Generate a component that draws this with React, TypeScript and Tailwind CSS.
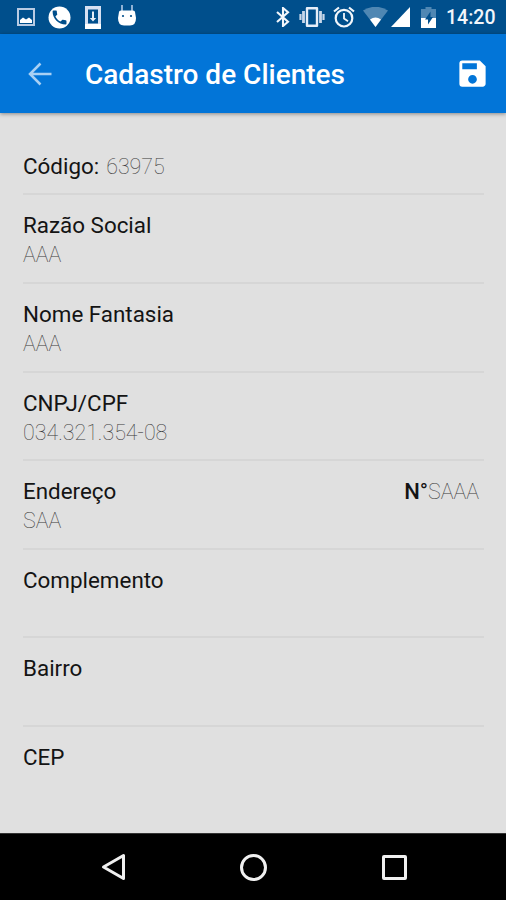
import React from 'react';
import { MdSave } from 'react-icons/md';

type FieldProps = {
    label: string;
    value?: string;
    children?: React.ReactNode;
    last?: boolean;
};

function Field({ label, value, children, last }: FieldProps) {
    return (
        <div
            className={
                last
                    ? 'h-[88.6px] pt-[16px]'
                    : 'h-[88.6px] pt-[16px] border-b-2 border-[#d6d6d6]'
            }
        >
            <div className="flex justify-between leading-[29px]">
                <span className="text-[22.4px] text-[#141414]">{label}</span>
                {children}
            </div>
            <p className="text-[21.4px] leading-[30px] font-thin text-[#3c3c3c]">
                {value}
            </p>
        </div>
    );
}

function StatusBar() {
    return (
        <div className="h-[34px] shrink-0 flex items-center justify-between bg-[#004f8c] text-[#f2f6fb] pl-[17px] pr-[11px]">
            <div className="flex items-center">
                <svg className="w-[18px] h-[18px]" viewBox="0 0 18 18">
                    <path
                        d="M1 1h16v16H1z"
                        fill="none"
                        stroke="#b9cbe3"
                        strokeWidth="2"
                    />
                    <path d="M3 15v-3l3-2.500 3 2 3-2 3 2.500v3z" fill="#fff" />
                </svg>
                <svg className="w-[23px] h-[23px] ml-[13px]" viewBox="0 0 23 23">
                    <circle cx="11.500" cy="11.500" r="11" fill="#fff" />
                    <path
                        transform="translate(2.300 2.300) scale(.77)"
                        d="M20 15.500c-1.200 0-2.400-.2-3.600-.6-.3-.1-.7 0-1 .2l-2.200 2.200c-2.800-1.400-5.100-3.800-6.600-6.600l2.200-2.200c.3-.3.4-.7.2-1C8.700 6.400 8.500 5.200 8.500 4c0-.6-.4-1-1-1H4c-.6 0-1 .4-1 1 0 9.400 7.600 17 17 17 .6 0 1-.4 1-1v-3.500c0-.6-.4-1-1-1z"
                        fill="#004f8c"
                    />
                </svg>
                <svg className="w-[16px] h-[23px] ml-[14px]" viewBox="0 0 16 23">
                    <path
                        d="M0 0h16v23H0zM3 3.500v14h10v-14z"
                        fill="#d6e0f2"
                        fillRule="evenodd"
                    />
                    <path d="M0 18h16v5H0z" fill="#fff" />
                    <path d="M7 5.500h2V12h2.200L8 15.500 4.800 12H7z" fill="#e6eef8" />
                </svg>
                <svg className="w-[18px] h-[22px] ml-[17px] -mt-1" viewBox="0 0 18 22">
                    <path
                        d="M4 1v6M14 1v6"
                        stroke="#9fbcdc"
                        strokeWidth="1.800"
                    />
                    <path
                        d="M1 8Q1 6.500 3 6.500h12q2 0 2 1.500l1 6Q18 21.500 12 21.500H6Q0 21.500 0 14z"
                        fill="#fff"
                    />
                    <circle cx="5" cy="12" r="1.100" fill="#004f8c" />
                    <circle cx="13" cy="12" r="1.100" fill="#004f8c" />
                </svg>
            </div>
            <div className="flex items-center">
                <svg className="w-[14px] h-[20px] mr-[9px]" viewBox="0 0 14 20">
                    <path
                        d="M1 5l11 9.800-5 4.200V1l5 4.200L1 15"
                        fill="none"
                        stroke="#f2f6fb"
                        strokeWidth="2.100"
                    />
                </svg>
                <svg className="w-[26px] h-[20px] mr-[8px]" viewBox="0 0 26 20">
                    <path
                        d="M8 1.300h10v17.400H8z"
                        fill="none"
                        stroke="#e6eef8"
                        strokeWidth="2.400"
                        strokeLinejoin="round"
                    />
                    <path
                        d="M4.500 4v12M21.500 4v12"
                        stroke="#c8d8ea"
                        strokeWidth="2.800"
                    />
                    <path
                        d="M1.500 7v6M24.500 7v6"
                        stroke="#c8d8ea"
                        strokeWidth="2.200"
                    />
                </svg>
                <svg className="w-[22px] h-[22px] mr-[8px]" viewBox="0 0 22 22">
                    <g fill="none" stroke="#f2f6fb" strokeWidth="2.200">
                        <circle cx="11" cy="12.200" r="8.300" />
                        <path d="M1 5.500l5-4M21 5.500l-5-4" />
                        <path d="M11 7v5.500l4 2.700" strokeWidth="1.800" />
                    </g>
                </svg>
                <svg className="w-[25px] h-[20px] mr-[3px]" viewBox="0 0 25 20">
                    <path d="M0 3.500Q12.500-4 25 3.500L12.500 20z" fill="#4f87b3" />
                    <path d="M7 12.500Q12.500 8.500 18 12.500L12.500 20z" fill="#fff" />
                </svg>
                <svg className="w-[19px] h-[20px] mr-[11px]" viewBox="0 0 19 20">
                    <path d="M19 0v20H0z" fill="#fff" />
                </svg>
                <svg className="w-[15px] h-[21px] mr-[10px]" viewBox="0 0 15 21">
                    <path d="M4.500 0h6v2H15v19H0V2h4.500z" fill="#4f87b3" />
                    <path d="M0 11h15v10H0z" fill="#fff" />
                    <path d="M9.500 4.500L4 12.500h3v5L12 10H9.500z" fill="#004f8c" />
                </svg>
                <span className="w-[49px] pt-[1px] text-[19.5px] leading-[33px] font-medium whitespace-nowrap">
                    14:20
                </span>
            </div>
        </div>
    );
}

export default function App() {
    return (
        <div className="w-full h-[900px] flex flex-col overflow-hidden bg-[#e0e0e0] font-['Roboto',sans-serif]">
            <StatusBar />
            <header className="h-[79px] shrink-0 flex items-center bg-[#0275d8] text-white pl-[28px] pr-[20px] shadow-[0_1px_4px_rgba(0,0,0,0.4)]">
                <svg className="w-[24px] h-[24px]" viewBox="0 0 24 24">
                    <path
                        d="M12.500 1.500L2 12l10.500 10.500M2 12h21.500"
                        fill="none"
                        stroke="#a8d0f4"
                        strokeWidth="2.500"
                    />
                </svg>
                <h1 className="flex-1 ml-[33px] pt-[2px] text-[28px] leading-[32px] font-medium">
                    Cadastro de Clientes
                </h1>
                <MdSave className="w-[35px] h-[35px] -mr-1" />
            </header>
            <main className="flex-1 pl-[23px] pr-[22px]">
                <div className="h-[82.4px] pt-[39px] border-b-2 border-[#d6d6d6] leading-[29px]">
                    <span className="text-[22.4px] text-[#141414]">
                        Código:
                    </span>
                    <span className="ml-[7px] text-[21.4px] font-thin text-[#3c3c3c]">
                        63975
                    </span>
                </div>
                <Field label="Razão Social" value="AAA" />
                <Field label="Nome Fantasia" value="AAA" />
                <Field label="CNPJ/CPF" value="034.321.354-08" />
                <Field label="Endereço" value="SAA">
                    <span className="pr-[5px] text-[22px] text-[#141414]">
                        <span className="font-medium">N</span>°
                        <span className="text-[21.4px] font-thin text-[#3c3c3c]">
                            SAAA
                        </span>
                    </span>
                </Field>
                <Field label="Complemento" />
                <Field label="Bairro" />
                <Field label="CEP" last />
            </main>
            <nav className="h-[67px] shrink-0 flex items-center justify-between bg-black border-t border-[#333] pl-[101px] pr-[99px]">
                <svg className="w-[24px] h-[28px]" viewBox="0 0 24 28">
                    <path
                        d="M22.500 2.500v23L2.500 14z"
                        fill="none"
                        stroke="#f0f0f0"
                        strokeWidth="3"
                        strokeLinejoin="round"
                    />
                </svg>
                <div className="w-[27px] h-[27px] rounded-full border-[3px] border-[#f0f0f0]" />
                <div className="w-[25px] h-[25px] rounded-[2px] border-[3px] border-[#f0f0f0]" />
            </nav>
        </div>
    );
}
